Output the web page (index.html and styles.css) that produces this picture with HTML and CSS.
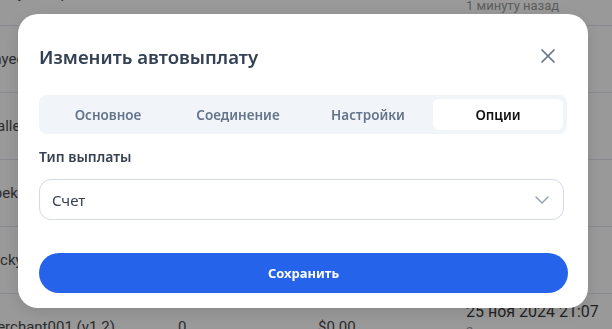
FILE: index.html
```html
<!DOCTYPE html>
<html lang="ru">
<head>
    <meta charset="UTF-8">
    <meta name="viewport" content="width=device-width, initial-scale=1.0">
    <title>Автовыплаты</title>
    <link rel="stylesheet" href="styles.css">
</head>
<body>
    <div class="table">
        <div class="row first">
            <div class="cell name">Sunny Group</div>
            <div class="cell">2</div>
            <div class="cell">$12.00</div>
            <div class="cell date">25 ноя 2024 21:09<span class="ago">1 минуту назад</span></div>
        </div>
        <div class="row">
            <div class="cell name">Payee test</div>
            <div class="cell">0</div>
            <div class="cell">$0.00</div>
            <div class="cell date">—</div>
        </div>
        <div class="row">
            <div class="cell name">Wallet</div>
            <div class="cell">0</div>
            <div class="cell">$0.00</div>
            <div class="cell date">—</div>
        </div>
        <div class="row">
            <div class="cell name">Apeka</div>
            <div class="cell">0</div>
            <div class="cell">$0.00</div>
            <div class="cell date">—</div>
        </div>
        <div class="row">
            <div class="cell name">Lucky</div>
            <div class="cell">0</div>
            <div class="cell">$0.00</div>
            <div class="cell date">—</div>
        </div>
        <div class="row">
            <div class="cell name">merchant001 (v1.2)</div>
            <div class="cell">0</div>
            <div class="cell">$0.00</div>
            <div class="cell date">25 ноя 2024 21:07<span class="ago">2 минуты назад</span></div>
        </div>
    </div>

    <div class="overlay">
        <div class="modal">
            <div class="modal-header">
                <h2 class="modal-title">Изменить автовыплату</h2>
                <button class="close" aria-label="Закрыть">
                    <svg width="14" height="14" viewBox="0 0 14 14">
                        <path d="M1 1 L13 13 M13 1 L1 13" stroke="#64748b" stroke-width="1.7" stroke-linecap="round" fill="none"/>
                    </svg>
                </button>
            </div>

            <div class="tabs">
                <div class="tab">Основное</div>
                <div class="tab">Соединение</div>
                <div class="tab">Настройки</div>
                <div class="tab active">Опции</div>
            </div>

            <label class="label">Тип выплаты</label>
            <div class="select">
                <span>Счет</span>
                <svg width="14" height="8" viewBox="0 0 14 8">
                    <path d="M1 1 L7 7 L13 1" stroke="#94a3b8" stroke-width="1.5" stroke-linecap="round" stroke-linejoin="round" fill="none"/>
                </svg>
            </div>

            <button class="save">Сохранить</button>
        </div>
    </div>
</body>
</html>
```

FILE: styles.css
```css
html {
    overflow: hidden;
}

body {
    margin: 0;
    width: 612px;
    height: 329px;
    overflow: hidden;
    background-color: #fff;
    font-family: "Noto Sans", Arial, sans-serif;
}

/* таблица под модальным окном */
.table {
    margin-top: -32px;
    margin-left: -16px;
    font-family: Roboto, Arial, sans-serif;
    color: #4b4b4b;
}

.row {
    display: grid;
    grid-template-columns: 194px 140px 148px 1fr;
    align-items: center;
    height: 67px;
    box-sizing: border-box;
    border-bottom: 1px solid #e4e6ee;
}

.row.first {
    height: 58px;
    align-items: start;
}

.row.first .cell {
    padding-top: 16px;
}

.row.first .date {
    padding-top: 8px;
}

.cell {
    font-size: 15px;
    line-height: 18px;
    white-space: nowrap;
}

.date {
    align-self: start;
    padding-top: 8px;
    display: flex;
    flex-direction: column;
    font-size: 16px;
    line-height: 20px;
    color: #3a3a3a;
}

.ago {
    font-size: 13px;
    color: #9a9a9a;
}

.overlay {
    position: fixed;
    inset: 0;
    background-color: rgba(0, 0, 0, 0.4);
    padding: 14px 0 0 18px;
}

.modal {
    width: 570px;
    height: 294px;
    box-sizing: border-box;
    background-color: #fff;
    border-radius: 20px;
    box-shadow: 0 4px 16px rgba(0, 0, 0, 0.12);
    padding: 28px 20px 0 21px;
}

.modal-header {
    display: flex;
    justify-content: space-between;
    align-items: center;
    height: 28px;
}

.modal-title {
    margin: 0;
    font-size: 18.6px;
    font-weight: 600;
    color: #334155;
}

.close {
    border: none;
    background: none;
    padding: 0;
    margin-right: 13px;
    width: 14px;
    height: 14px;
    display: flex;
    cursor: pointer;
}

.tabs {
    margin-top: 25px;
    width: 528px;
    box-sizing: border-box;
    display: grid;
    grid-template-columns: repeat(4, 1fr);
    padding: 4px;
    background-color: #f1f5f9;
    border-radius: 8px;
}

.tab {
    height: 31px;
    display: flex;
    align-items: center;
    justify-content: center;
    font-size: 13.5px;
    font-weight: 600;
    color: #64748b;
    border-radius: 6px;
}

.tab.active {
    background-color: #fff;
    color: #111;
}

.label {
    display: block;
    margin-top: 13px;
    line-height: 20px;
    font-size: 14px;
    font-weight: 600;
    color: #374151;
}

.select {
    margin-top: 12px;
    width: 525px;
    height: 41px;
    box-sizing: border-box;
    border: 1px solid #d4d9e2;
    border-radius: 12px;
    display: flex;
    align-items: center;
    justify-content: space-between;
    padding: 0 14px 0 12px;
    font-size: 15px;
    color: #374151;
}

.save {
    display: block;
    margin-top: 33px;
    width: 529px;
    height: 40px;
    border: none;
    border-radius: 20px;
    background-color: #2563eb;
    color: #fff;
    font-family: "Noto Sans", Arial, sans-serif;
    font-size: 13px;
    font-weight: 700;
    cursor: pointer;
}
```
